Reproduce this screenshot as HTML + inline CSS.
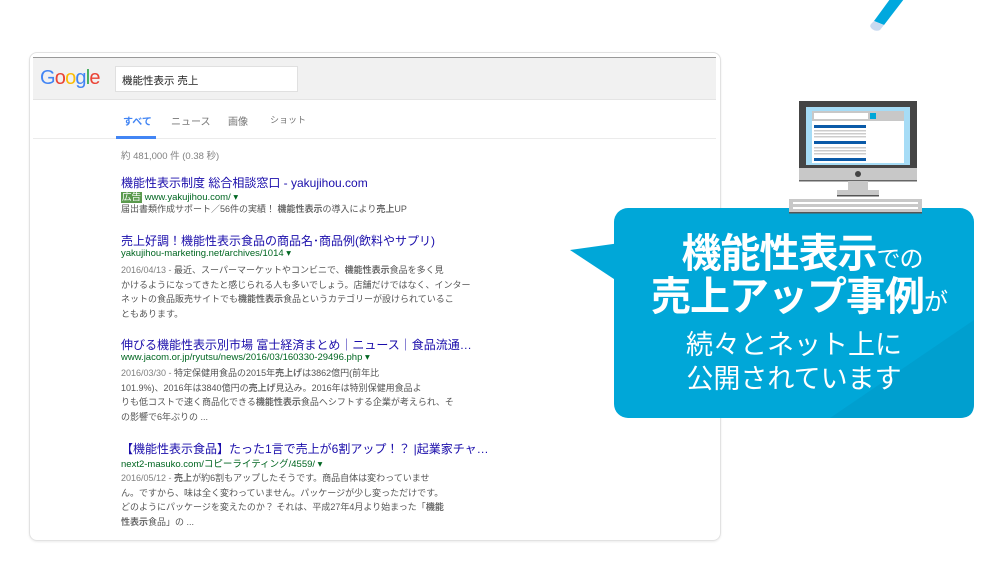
<!DOCTYPE html>
<html><head><meta charset="utf-8"><style>
*{margin:0;padding:0;box-sizing:border-box}
body{width:1000px;height:565px;background:#fff;position:relative;overflow:hidden;font-family:"Liberation Sans","Noto Sans CJK JP",sans-serif}
.a{position:absolute;white-space:nowrap}
.t{font-size:12px;color:#1a0dab}
.u{font-size:9.5px;color:#006621}
.s{font-size:9px;color:#545454}
.d{color:#808080}
b{color:#6a6a6a}
</style></head><body>
<div class="a" style="left:29px;top:52px;width:692px;height:489px;border:1px solid #e2e2e2;border-radius:8px;box-shadow:0 1px 2px rgba(0,0,0,.08)"></div>
<div class="a" style="left:33px;top:57px;width:683px;height:43px;background:#f1f1f1;border-top:1px solid #999;border-bottom:1px solid #e4e4e4"></div>
<div class="a" style="left:40px;top:67px;font-size:20px;letter-spacing:-0.8px;font-family:'Liberation Sans',sans-serif"><span style="color:#4285f4">G</span><span style="color:#ea4335">o</span><span style="color:#fbbc05">o</span><span style="color:#4285f4">g</span><span style="color:#34a853">l</span><span style="color:#ea4335">e</span></div>
<div class="a" style="left:115px;top:66px;width:183px;height:26px;background:#fff;border:1px solid #e0e0e0;font-size:10.5px;padding:6px 6px;color:#222">機能性表示 売上</div>
<div class="a" style="left:33px;top:138px;width:683px;height:1px;background:#ebebeb"></div>
<div class="a" style="left:116px;top:136px;width:40px;height:3px;background:#4285f4"></div>
<div class="a" style="left:123px;top:113px;font-size:10px;color:#4285f4;font-weight:bold">すべて</div>
<div class="a" style="left:171px;top:113px;font-size:10px;color:#777">ニュース</div>
<div class="a" style="left:228px;top:113px;font-size:10px;color:#777">画像</div>
<div class="a" style="left:270px;top:113px;font-size:9px;color:#777">ショット</div>
<div class="a" style="left:121px;top:148px;font-size:9.5px;color:#808080">約 481,000 件 (0.38 秒)</div>

<div class="a t" style="left:121px;top:174px">機能性表示制度 総合相談窓口 - yakujihou.com</div>
<div class="a u" style="left:121px;top:189px"><span style="background:#5b9a4e;color:#fff;padding:0 1px">広告</span> www.yakujihou.com/ ▾</div>
<div class="a s" style="left:121px;top:202px">届出書類作成サポート／56件の実績！ <b>機能性表示</b>の導入により<b>売上</b>UP</div>

<div class="a t" style="left:121px;top:232px">売上好調！機能性表示食品の商品名･商品例(飲料やサプリ)</div>
<div class="a u" style="left:121px;top:248px">yakujihou-marketing.net/archives/1014 ▾</div>
<div class="a s" style="left:121px;top:263px;line-height:14.6px"><span class="d">2016/04/13 - </span>最近、スーパーマーケットやコンビニで、<b>機能性表示</b>食品を多く見<br>かけるようになってきたと感じられる人も多いでしょう。店舗だけではなく、インター<br>ネットの食品販売サイトでも<b>機能性表示</b>食品というカテゴリーが設けられているこ<br>ともあります。</div>

<div class="a t" style="left:121px;top:336px">伸びる機能性表示別市場 富士経済まとめ｜ニュース｜食品流通…</div>
<div class="a u" style="left:121px;top:352px">www.jacom.or.jp/ryutsu/news/2016/03/160330-29496.php ▾</div>
<div class="a s" style="left:121px;top:366px;line-height:14.6px"><span class="d">2016/03/30 - </span>特定保健用食品の2015年<b>売上げ</b>は3862億円(前年比<br>101.9%)、2016年は3840億円の<b>売上げ</b>見込み。2016年は特別保健用食品よ<br>りも低コストで速く商品化できる<b>機能性表示</b>食品へシフトする企業が考えられ、そ<br>の影響で6年ぶりの ...</div>

<div class="a t" style="left:121px;top:440px">【機能性表示食品】たった1言で売上が6割アップ！？ |起業家チャ…</div>
<div class="a u" style="left:121px;top:456px">next2-masuko.com/コピーライティング/4559/ ▾</div>
<div class="a s" style="left:121px;top:471px;line-height:14.6px"><span class="d">2016/05/12 - </span><b>売上</b>が約6割もアップしたそうです。商品自体は変わっていませ<br>ん。ですから、味は全く変わっていません。パッケージが少し変っただけです。<br>どのようにパッケージを変えたのか？ それは、平成27年4月より始まった「<b>機能<br>性表示</b>食品」の ...</div>

<svg class="a" style="left:0;top:0" width="1000" height="565">
<path d="M893 -5 L904 -1 L884 25 L874 21 Z" fill="#00a8de"/>
<path d="M874 21 L884 25 L880 30 Q876 32 872 29 Q869 26 871 24 Z" fill="#c9daf0"/>
<polygon points="570,250 620,243 620,283" fill="#00a7d8"/>
<rect x="614" y="208" width="360" height="210" rx="14" fill="#00a7d8"/>
<path d="M830 418 L974 320 L974 404 Q974 418 960 418 Z" fill="#009fcf"/>
<rect x="799" y="101" width="118" height="68" fill="#454545"/>
<rect x="806" y="107" width="104" height="58" fill="#a6dcf6"/>
<rect x="812" y="111" width="92" height="52" fill="#fff"/>
<rect x="812" y="111" width="92" height="10" fill="#c8c8c8"/>
<rect x="814" y="113" width="54" height="6" fill="#fff"/>
<rect x="870" y="113" width="6" height="6" fill="#00a7d8"/>
<rect x="814" y="125" width="52" height="3" fill="#0a5aa8"/>
<rect x="814" y="130" width="52" height="1.5" fill="#ccc"/><rect x="814" y="133" width="52" height="1.5" fill="#ccc"/><rect x="814" y="136" width="52" height="1.5" fill="#ccc"/>
<rect x="814" y="141" width="52" height="3" fill="#0a5aa8"/>
<rect x="814" y="147" width="52" height="1.5" fill="#ccc"/><rect x="814" y="150" width="52" height="1.5" fill="#ccc"/><rect x="814" y="153" width="52" height="1.5" fill="#ccc"/>
<rect x="814" y="158" width="52" height="3" fill="#0a5aa8"/>
<rect x="799" y="168" width="118" height="13" fill="#c8c8c8"/>
<rect x="799" y="180" width="118" height="1.5" fill="#666"/>
<circle cx="858" cy="174" r="3" fill="#444"/>
<rect x="848" y="181" width="20" height="10" fill="#c8c8c8"/>
<rect x="837" y="190" width="42" height="6" fill="#c8c8c8"/>
<rect x="837" y="195" width="42" height="1.5" fill="#555"/>
<rect x="789" y="199" width="133" height="14" fill="#c8c8c8"/>
<rect x="793" y="202" width="125" height="2" fill="#fff"/><rect x="793" y="207" width="125" height="2" fill="#fff"/>
<rect x="789" y="212" width="133" height="1.5" fill="#555"/>
</svg>
<div class="a" style="left:614px;top:231px;width:360px;text-align:center;color:#fff;font-size:40px;font-weight:bold;line-height:46px;letter-spacing:-1px;padding-left:16px">機能性表示<span style="font-size:24px;font-weight:normal">での</span></div>
<div class="a" style="left:614px;top:274px;width:360px;text-align:center;color:#fff;font-size:40px;font-weight:bold;line-height:46px;letter-spacing:-1px;padding-left:10px">売上アップ事例<span style="font-size:24px;font-weight:normal">が</span></div>
<div class="a" style="left:614px;top:327px;width:360px;text-align:center;color:#fff;font-size:27px;line-height:36px">続々とネット上に</div>
<div class="a" style="left:614px;top:361px;width:360px;text-align:center;color:#fff;font-size:27px;line-height:36px">公開されています</div>
</body></html>
